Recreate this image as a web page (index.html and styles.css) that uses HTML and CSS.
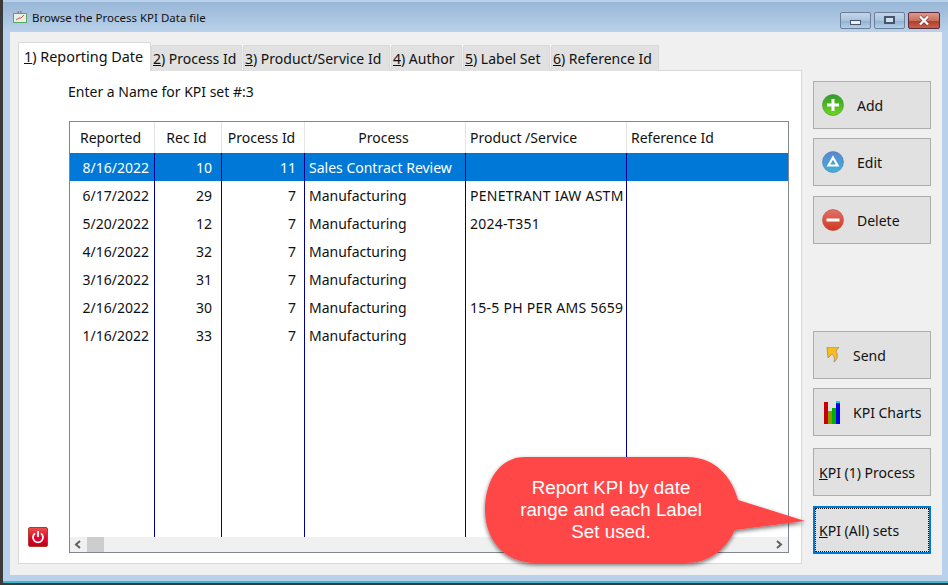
FILE: index.html
```html
<!DOCTYPE html>
<html lang="en">
<head>
    <meta charset="UTF-8">
    <meta name="viewport" content="width=device-width, initial-scale=1.0">
    <title>Browse the Process KPI Data file</title>
    <link rel="stylesheet" href="styles.css">
</head>
<body>
    <div class="window">
        <div class="title-bar">
            <svg class="title-icon" width="14" height="12" viewBox="0 0 14 12">
                <path d="M4.5 1h5" stroke="#8a8a8a" stroke-width="2" stroke-dasharray="1.5 1"/>
                <rect x="0.5" y="2.5" width="13" height="9" fill="#e8efe4" stroke="#5aa860"/>
                <path d="M3 9l3-2 2 0 3-3" fill="none" stroke="#d9534f"/>
            </svg>
            <span class="title-text">Browse the Process KPI Data file</span>
            <div class="win-buttons">
                <div class="win-btn"><span class="glyph-min"></span></div>
                <div class="win-btn"><span class="glyph-max"></span></div>
                <div class="win-btn win-close">
                    <svg width="16" height="11" viewBox="0 0 16 11">
                        <path d="M4 1.5l8 8M12 1.5l-8 8" stroke="#6b3a34" stroke-width="3.6"/>
                        <path d="M4 1.5l8 8M12 1.5l-8 8" stroke="#fff" stroke-width="2.4"/>
                    </svg>
                </div>
            </div>
        </div>

        <div class="client">
            <div class="tabs-area">
                <div class="tab-strip">
                    <div class="tab active"><u>1</u>) Reporting Date</div>
                    <div class="tab tab-process"><u>2</u>) Process Id</div>
                    <div class="tab tab-product"><u>3</u>) Product/Service Id</div>
                    <div class="tab tab-author"><u>4</u>) Author</div>
                    <div class="tab tab-label"><u>5</u>) Label Set</div>
                    <div class="tab tab-ref"><u>6</u>) Reference Id</div>
                </div>
                <div class="tab-panel">
                    <div class="side">
                        <div class="power-btn">
                            <svg width="14" height="14" viewBox="0 0 14 14">
                                <path d="M4 3.4a5 5 0 1 0 6 0" fill="none" stroke="#fff" stroke-width="1.8"/>
                                <path d="M7 1v6" stroke="#fff" stroke-width="1.8"/>
                            </svg>
                        </div>
                    </div>
                    <div class="main">
                        <div class="set-name">Enter a Name for KPI set #:3</div>
                        <div class="grid">
                            <table class="data-table">
                                <colgroup>
                                    <col class="col-reported">
                                    <col class="col-recid">
                                    <col class="col-procid">
                                    <col class="col-process">
                                    <col class="col-product">
                                    <col class="col-ref">
                                </colgroup>
                                <thead>
                                    <tr>
                                        <th>Reported</th>
                                        <th>Rec Id</th>
                                        <th>Process Id</th>
                                        <th>Process</th>
                                        <th>Product /Service</th>
                                        <th>Reference Id</th>
                                    </tr>
                                </thead>
                                <tbody>
                                    <tr class="selected">
                                        <td class="date">8/16/2022</td><td class="num rec">10</td><td class="num">11</td><td>Sales Contract Review</td><td></td><td></td>
                                    </tr>
                                    <tr>
                                        <td class="date">6/17/2022</td><td class="num rec">29</td><td class="num">7</td><td>Manufacturing</td><td class="product">PENETRANT IAW ASTM</td><td></td>
                                    </tr>
                                    <tr>
                                        <td class="date">5/20/2022</td><td class="num rec">12</td><td class="num">7</td><td>Manufacturing</td><td class="product">2024-T351</td><td></td>
                                    </tr>
                                    <tr>
                                        <td class="date">4/16/2022</td><td class="num rec">32</td><td class="num">7</td><td>Manufacturing</td><td></td><td></td>
                                    </tr>
                                    <tr>
                                        <td class="date">3/16/2022</td><td class="num rec">31</td><td class="num">7</td><td>Manufacturing</td><td></td><td></td>
                                    </tr>
                                    <tr>
                                        <td class="date">2/16/2022</td><td class="num rec">30</td><td class="num">7</td><td>Manufacturing</td><td class="product">15-5 PH PER AMS 5659</td><td></td>
                                    </tr>
                                    <tr>
                                        <td class="date">1/16/2022</td><td class="num rec">33</td><td class="num">7</td><td>Manufacturing</td><td></td><td></td>
                                    </tr>
                                    <tr class="filler">
                                        <td></td><td></td><td></td><td></td><td></td><td></td>
                                    </tr>
                                </tbody>
                            </table>
                            <div class="h-scroll">
                                <svg class="arrow" width="17" height="15" viewBox="0 0 17 15"><path d="M10 4L6 7.5l4 3.5" fill="none" stroke="#606060" stroke-width="2"/></svg>
                                <div class="thumb"></div>
                                <div class="track"></div>
                                <svg class="arrow" width="17" height="15" viewBox="0 0 17 15"><path d="M6 4l4 3.5L6 11" fill="none" stroke="#606060" stroke-width="2"/></svg>
                            </div>
                        </div>
                    </div>
                </div>
            </div>

            <div class="buttons">
                <div class="btn-group">
                    <button class="btn">
                        <svg class="icon" width="22" height="22" viewBox="0 0 22 22">
                            <defs>
                                <linearGradient id="green" x1="0" y1="0" x2="0" y2="1">
                                    <stop offset="0" stop-color="#2f9a2a"/><stop offset="1" stop-color="#6fd81c"/>
                                </linearGradient>
                            </defs>
                            <circle cx="11" cy="11" r="10.5" fill="url(#green)" stroke="#3c8f2c" stroke-width="0.6"/>
                            <path d="M11 5v12M5 11h12" stroke="#fff" stroke-width="3"/>
                        </svg>
                        <span>Add</span>
                    </button>
                    <button class="btn">
                        <svg class="icon" width="22" height="22" viewBox="0 0 22 22">
                            <defs>
                                <linearGradient id="blue" x1="0" y1="0" x2="0" y2="1">
                                    <stop offset="0" stop-color="#5a86cf"/><stop offset="1" stop-color="#3fb2d8"/>
                                </linearGradient>
                            </defs>
                            <circle cx="11" cy="11" r="10.5" fill="url(#blue)" stroke="#4d78b8" stroke-width="0.6"/>
                            <path d="M11 6.5l4.5 8h-9z" fill="none" stroke="#fff" stroke-width="2.2"/>
                        </svg>
                        <span>Edit</span>
                    </button>
                    <button class="btn btn-delete">
                        <svg class="icon" width="22" height="22" viewBox="0 0 22 22">
                            <defs>
                                <linearGradient id="red" x1="0" y1="0" x2="0" y2="1">
                                    <stop offset="0" stop-color="#e0716a"/><stop offset="1" stop-color="#cf3a22"/>
                                </linearGradient>
                            </defs>
                            <circle cx="11" cy="11" r="10.5" fill="url(#red)" stroke="#c8402e" stroke-width="0.6"/>
                            <path d="M4.5 11h13" stroke="#fff" stroke-width="3"/>
                        </svg>
                        <span>Delete</span>
                    </button>
                </div>
                <div class="btn-group">
                    <button class="btn btn-send">
                        <svg class="icon" width="14" height="16" viewBox="0 0 14 16">
                            <path d="M1 0H13L10 4C12 8 12 12 8 15C9 11 8 9 6 7L2 11Z" fill="#fbbc1d" stroke="#8d8468" stroke-width="0.7"/>
                        </svg>
                        <span>Send</span>
                    </button>
                    <button class="btn btn-charts">
                        <svg class="icon" width="16" height="23" viewBox="0 0 16 23">
                            <rect x="0" y="1" width="4" height="22" fill="#c80000"/>
                            <rect x="4" y="10" width="4" height="13" fill="#8a9a00"/>
                            <rect x="8" y="7" width="4" height="16" fill="#00b000"/>
                            <rect x="12" y="0" width="4" height="23" fill="#0000f0"/>
                            <rect x="12" y="0" width="4" height="2" fill="#00e0f0"/>
                        </svg>
                        <span>KPI Charts</span>
                    </button>
                    <button class="btn btn-text btn-process"><span><u>K</u>PI (1) Process</span></button>
                    <button class="btn btn-text btn-focus"><span><u>K</u>PI (All) sets</span></button>
                </div>
            </div>
        </div>
    </div>

    <div class="callout">
        <svg class="callout-shape" width="330" height="116" viewBox="0 0 330 116">
            <defs>
                <filter id="shadow" x="-5%" y="-5%" width="110%" height="120%">
                    <feDropShadow dx="0" dy="2" stdDeviation="2" flood-color="#000" flood-opacity="0.55"/>
                </filter>
            </defs>
            <path d="M45 2H207C235 2 252 22 258 45L325 66 255 75C245 95 230 108 205 108H55C25 108 5 85 5 55S20 2 45 2Z" fill="#ff4747" filter="url(#shadow)"/>
        </svg>
        <div class="callout-text">Report KPI by date range and each Label Set used.</div>
    </div>
</body>
</html>
```

FILE: styles.css
```css
* {
    margin: 0;
    padding: 0;
    box-sizing: border-box;
}

body {
    width: 948px;
    height: 585px;
    overflow: hidden;
    position: relative;
    background: #3a3a3a;
    font-family: 'Noto Sans', sans-serif;
    font-size: 14px;
    color: #111;
}

.window {
    height: 581px;
    margin-left: 3px;
    padding-top: 2px;
    background: #b9d1ea;
    display: flex;
    flex-direction: column;
    box-shadow: 0 2px 0 #3bb8cf;
}

.title-bar {
    height: 30px;
    flex: none;
    display: flex;
    align-items: center;
    padding-left: 10px;
    background: linear-gradient(#98b6d6, #b9d1ea);
}

.title-icon {
    flex: none;
}

.title-text {
    margin-left: 5px;
    font-size: 11.5px;
    color: #111;
}

.win-buttons {
    margin-left: auto;
    margin-right: 8px;
    margin-top: 6px;
    display: flex;
    gap: 3px;
}

.win-btn {
    width: 31px;
    height: 17px;
    border: 1px solid #6b7f98;
    border-radius: 2px;
    background: linear-gradient(#c3d6ea 0%, #a9c3de 50%, #8fb0d2 51%, #b4cee8 100%);
    display: flex;
    align-items: center;
    justify-content: center;
}

.win-close {
    width: 32px;
    border-color: #5a2a3a;
    background: linear-gradient(#dc9a8c 0%, #c9705e 50%, #b03a28 51%, #c9624e 100%);
}

.glyph-min {
    width: 11px;
    height: 5px;
    margin-top: 4px;
    background: #e8f0f8;
    border: 1px solid #46566a;
}

.glyph-max {
    width: 11px;
    height: 8px;
    background: #cfe0f0;
    border: 2px solid #46566a;
}

.client {
    flex: 1;
    margin: 0 6px 6px 7px;
    background: #f0f0f0;
    display: flex;
}

.tabs-area {
    width: 792px;
    height: 532px;
    padding: 11px 0 0 8px;
    display: flex;
    flex-direction: column;
}

.tab-strip {
    height: 28px;
    flex: none;
    display: flex;
    align-items: flex-end;
    gap: 1px;
    position: relative;
    z-index: 1;
    margin-bottom: -1px;
}

.tab {
    height: 26px;
    padding-left: 1px;
    display: flex;
    align-items: center;
    white-space: pre;
    background: #e1e1e1;
    border: 1px solid #d9d9d9;
    border-bottom: none;
    border-radius: 2px 2px 0 0;
}

.tab.active {
    width: 133px;
    height: 29px;
    padding: 0 0 2px 5px;
    font-size: 14.4px;
    background: #fff;
    margin-right: -1px;
}

.tab-process { width: 91px; }
.tab-product { width: 147px; }
.tab-author { width: 71px; }
.tab-label { width: 87px; }
.tab-ref { width: 108px; }

.tab-panel {
    flex: 1;
    background: #fff;
    border: 1px solid #d9d9d9;
    display: flex;
}

.side {
    width: 50px;
    flex: none;
    padding: 0 0 16px 9px;
    display: flex;
    align-items: flex-end;
}

.power-btn {
    width: 20px;
    height: 20px;
    border-radius: 2px;
    background: linear-gradient(#e8504a, #e00028 60%, #c00020);
    border: 1px solid #b5382c;
    display: flex;
    align-items: center;
    justify-content: center;
}

.main {
    flex: 1;
    min-width: 0;
    padding: 11px 12px 10px 0;
    display: flex;
    flex-direction: column;
}

.set-name {
    height: 20px;
    line-height: 20px;
    margin: 0 0 19px -1px;
}

.grid {
    flex: 1;
    min-height: 0;
    border: 1px solid #82878f;
    background: #fff;
    display: flex;
    flex-direction: column;
}

.data-table {
    flex: 1;
    width: 718px;
    table-layout: fixed;
    border-collapse: separate;
    border-spacing: 0;
}

.col-reported { width: 85px; }
.col-recid { width: 67px; }
.col-procid { width: 83px; }
.col-process { width: 161px; }
.col-product { width: 161px; }
.col-ref { width: 161px; }

.data-table th {
    height: 31px;
    padding: 0 6px 0 3px;
    font-weight: normal;
    text-align: center;
    border-right: 1px solid #e4e4e4;
    white-space: nowrap;
    overflow: hidden;
}

.data-table th:nth-child(5),
.data-table th:nth-child(6) {
    padding: 0 4px;
    text-align: left;
}

.data-table td {
    height: 28px;
    padding: 0 4px;
    white-space: nowrap;
    overflow: hidden;
    border-right: 1px solid #000090;
}

.data-table td.date {
    padding-right: 5px;
    text-align: right;
}

.data-table td.num {
    padding-right: 8px;
    text-align: right;
}

.data-table td.rec {
    padding-right: 9px;
}

.data-table td.product {
    letter-spacing: 0.25px;
}

.data-table td:last-child,
.data-table th:last-child {
    border-right: none;
}

.data-table .selected td {
    background: #0078d7;
    color: #fff;
}

.data-table .filler td {
    height: 187px;
}

.h-scroll {
    height: 15px;
    flex: none;
    background: #f0f0f0;
    display: flex;
}

.arrow {
    flex: none;
}

.thumb {
    width: 17px;
    background: #cdcdcd;
}

.track {
    flex: 1;
}

.buttons {
    flex: 1;
    padding: 49px 0 0 11px;
    display: flex;
    flex-direction: column;
    justify-content: space-between;
}

.btn-group {
    display: flex;
    flex-direction: column;
    gap: 9px;
}

.buttons .btn-group:last-child {
    margin-bottom: 21px;
}

.btn {
    width: 118px;
    height: 48px;
    background: #e1e1e1;
    border: 1px solid #adadad;
    font-family: inherit;
    font-size: 14px;
    color: #111;
    display: flex;
    align-items: center;
    padding-left: 8px;
    text-align: left;
}

.btn .icon {
    flex: none;
    margin-right: 13px;
}

.btn-delete {
    margin-top: 1px;
}

.btn-send {
    padding-left: 12px;
}

.btn-send .icon {
    margin-right: 13px;
}

.btn-charts {
    padding-left: 10px;
}

.btn-process {
    margin-top: 3px;
}

.btn-text {
    padding-left: 5px;
}

.btn-focus {
    margin-top: 1px;
    border: 2px solid #0078d7;
    padding-left: 4px;
    outline: 1px dotted #111;
    outline-offset: -3px;
}

.callout {
    position: absolute;
    left: 480px;
    top: 455px;
    width: 330px;
    height: 116px;
}

.callout-shape {
    position: absolute;
    left: 0;
    top: 0;
}

.callout-text {
    position: absolute;
    left: 31px;
    top: 22px;
    width: 200px;
    text-align: center;
    font-family: 'Liberation Sans', Arial, sans-serif;
    font-size: 18.8px;
    line-height: 22px;
    color: #fff;
}
```
